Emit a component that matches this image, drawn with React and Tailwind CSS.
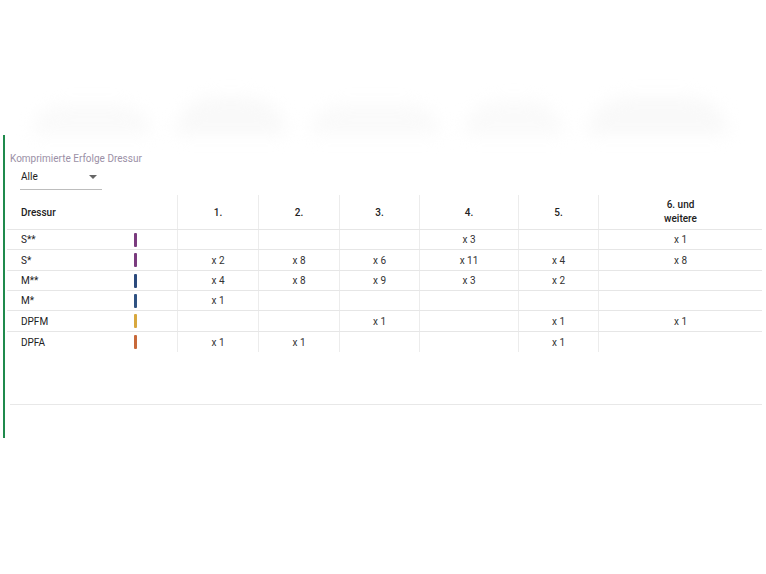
import React from "react";

const rows = [
  { label: "S**", color: "#7a3b7e", vals: ["", "", "", "x 3", "", "x 1"] },
  { label: "S*", color: "#7a3b7e", vals: ["x 2", "x 8", "x 6", "x 11", "x 4", "x 8"] },
  { label: "M**", color: "#2b4a7c", vals: ["x 4", "x 8", "x 9", "x 3", "x 2", ""] },
  { label: "M*", color: "#2f5282", vals: ["x 1", "", "", "", "", ""] },
  { label: "DPFM", color: "#d8a83e", vals: ["", "", "x 1", "", "x 1", "x 1"] },
  { label: "DPFA", color: "#c8693a", vals: ["x 1", "x 1", "", "", "x 1", ""] },
];

const widths = ["w-[81px]", "w-[81px]", "w-[80px]", "w-[99px]", "w-[80px]", "w-[164px]"];

export default function App() {
  return (
    <div
      className="w-[766px] h-[574px] bg-white overflow-hidden text-[#2a2a2a]"
      style={{ fontFamily: "Roboto, 'Liberation Sans', sans-serif" }}
    >
      <div className="h-[135px] flex items-end gap-6 px-8">
        <div className="h-[30px] w-[120px] rounded-t-[40px] bg-[#fafafa] blur-sm" />
        <div className="h-[38px] w-[110px] rounded-t-[50px] bg-[#f9f9f9] blur-sm" />
        <div className="h-[30px] w-[130px] rounded-t-[40px] bg-[#fafafa] blur-sm" />
        <div className="h-[34px] w-[100px] rounded-t-[40px] bg-[#fafafa] blur-sm" />
        <div className="h-[38px] w-[140px] rounded-t-[50px] bg-[#f9f9f9] blur-sm" />
      </div>
      <div className="ml-[3px] h-[303px] border-l-2 border-[#1f8a4c] flex flex-col">
        <div className="pl-[5px] pt-[17px] text-[10px] leading-[14px] text-[#9b90a6]">
          Komprimierte Erfolge Dressur
        </div>
        <div className="ml-[15px] w-[82px] h-[24px] border-b border-[#bdbdbd] flex items-start justify-between pt-[4px] pl-[1px] pr-[5px]">
          <span className="text-[10px] leading-[14px] text-[#222]">Alle</span>
          <svg width="8" height="4" viewBox="0 0 8 4" className="mt-[5px]">
            <path d="M0 0 L8 0 L4 4 Z" fill="#666" />
          </svg>
        </div>
        <div className="ml-[2px] mt-[5px] w-[755px] text-[10px]">
          <div className="flex h-[35px] border-b border-[#e6e6e6]">
            <div className="w-[170px] flex items-center pl-[14px] font-medium text-[#222]">Dressur</div>
            {["1.", "2.", "3.", "4.", "5."].map((h, i) => (
              <div
                key={h}
                className={`${widths[i]} border-l border-[#ececec] flex items-center justify-center font-medium text-[#222]`}
              >
                {h}
              </div>
            ))}
            <div className="w-[164px] border-l border-[#ececec] flex items-center justify-center text-center font-medium leading-[14px] text-[#222]">
              6. und
              <br />
              weitere
            </div>
          </div>
          {rows.map((r, ri) => (
            <div
              key={r.label}
              className={`flex ${ri === 1 || ri === 4 ? "h-[21px]" : "h-[20px]"} ${ri < rows.length - 1 ? "border-b border-[#e6e6e6]" : ""}`}
            >
              <div className="w-[170px] flex items-center">
                <span className="w-[127px] pl-[14px] text-[#222]">{r.label}</span>
                <span className="w-[3px] h-[14px] rounded-[1px]" style={{ background: r.color }} />
              </div>
              {r.vals.map((v, i) => (
                <div
                  key={i}
                  className={`${widths[i]} border-l border-[#ececec] flex items-center justify-center text-[#333]`}
                >
                  {v}
                </div>
              ))}
            </div>
          ))}
        </div>
        <div className="ml-[5px] mt-[52px] w-[752px] border-t border-[#e8e8e8]" />
      </div>
    </div>
  );
}
